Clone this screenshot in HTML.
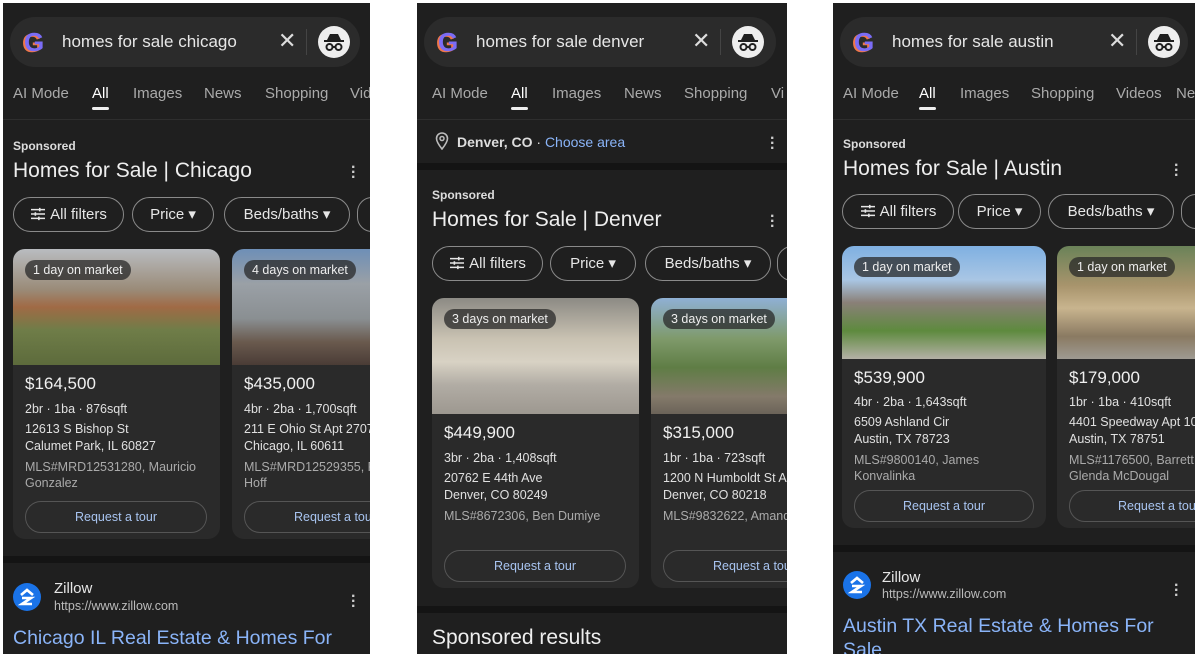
<!DOCTYPE html>
<html><head><meta charset="utf-8"><style>
*{margin:0;padding:0;box-sizing:border-box}
body{width:1200px;height:656px;background:#fff;position:relative;overflow:hidden;font-family:"Liberation Sans",Arial,sans-serif}
.p{position:absolute;top:3px;height:651px;background:#1f1f1f;overflow:hidden}
.a{position:absolute;white-space:nowrap}
.sb{position:absolute;left:7px;top:14px;width:350px;height:50px;border-radius:25px;background:#2b2b2b}
.g{position:absolute;left:14px;top:12px;width:26px;height:26px;font:bold 26px/26px "Liberation Sans";color:#7b6cf6;text-shadow:-2px 1px 0 #f0774a}
.q{position:absolute;left:52px;top:15px;font-size:17px;color:#e6e6e6;white-space:nowrap}
.x{position:absolute;left:268px;top:11px;font-size:22px;color:#ddd}
.vb{position:absolute;left:296px;top:12px;width:1px;height:26px;background:#444}
.inc{position:absolute;left:308px;top:9px;width:32px;height:32px;border-radius:50%;background:#eee}
.tab{position:absolute;top:82px;font-size:15px;color:#aaa;white-space:nowrap}
.tab.on{color:#fff}
.tab.on:after{content:"";position:absolute;left:0;right:0;bottom:-8px;height:3px;border-radius:2px;background:#eee}
.hr{position:absolute;left:0;right:0;height:1px;background:#2e2e2e}
.strip{position:absolute;left:0;right:0;height:7px;background:#141414}
.sp{font-size:12px;font-weight:bold;color:#ddd}
.tt{font-size:21px;color:#eee}
.dots{position:absolute;color:#ccc;font-size:16px;font-weight:bold;line-height:5px;width:4px}
.chip{position:absolute;height:35px;border:1px solid #8a8a8a;border-radius:18px;color:#e6e6e6;font-size:15px;line-height:33px;text-align:center;white-space:nowrap}
.chip svg{vertical-align:-2px;margin-right:4px}
.card{position:absolute;width:207px;background:#2a2a2a;border-radius:12px;overflow:hidden}
.img{position:absolute;left:0;top:0;right:0}
.badge{position:absolute;left:12px;top:11px;background:rgba(40,40,40,.75);color:#eee;font-size:12.5px;padding:3px 8px;border-radius:10px}
.pr{position:absolute;left:12px;font-size:17px;color:#f0f0f0}
.t1{position:absolute;left:12px;font-size:12.5px;color:#e0e0e0;line-height:17px;white-space:nowrap}
.t2{position:absolute;left:12px;font-size:12.5px;color:#aaa;line-height:16px;white-space:nowrap}
.btn{position:absolute;left:12px;width:182px;height:32px;border:1px solid #555;border-radius:16px;text-align:center;line-height:30px;color:#a8c4f0;font-size:12.5px;white-space:nowrap}
.zi{position:absolute;width:28px;height:28px;border-radius:50%;background:#1a73e8}
.link{font-size:19.5px;color:#8ab4f8}
</style></head><body>
<svg width="0" height="0" style="position:absolute">
 <defs>
  <symbol id="sl" viewBox="0 0 18 16"><g stroke="#e6e6e6" stroke-width="1.8" fill="none"><path d="M1 3h16M1 8h16M1 13h16"/><path d="M11 1v4M6 6v4M10 11v4"/></g></symbol>
  <symbol id="hat" viewBox="0 0 32 32"><path d="M9 14l3-6h8l3 6z" fill="#1f1f1f"/><rect x="6" y="14" width="20" height="2" fill="#1f1f1f"/><circle cx="11.5" cy="21" r="3" fill="none" stroke="#1f1f1f" stroke-width="2"/><circle cx="20.5" cy="21" r="3" fill="none" stroke="#1f1f1f" stroke-width="2"/><path d="M14.5 21h3" stroke="#1f1f1f" stroke-width="2"/></symbol>
  <symbol id="z" viewBox="0 0 28 28"><path d="M8 12l6-5 6 5" stroke="#fff" stroke-width="2.6" fill="none"/><path d="M9 15h9l-9 6h10" stroke="#fff" stroke-width="2.6" fill="none"/></symbol>
 </defs>
</svg>

<!-- PANEL 1 -->
<div class="p" style="left:3px;width:367px">
 <div class="sb"><div class="g">G</div><div class="q">homes for sale chicago</div><div class="x">✕</div><div class="vb"></div><div class="inc"><svg width="32" height="32"><use href="#hat"/></svg></div></div>
 <div class="tab" style="left:10px">AI Mode</div><div class="tab on" style="left:89px">All</div><div class="tab" style="left:130px">Images</div><div class="tab" style="left:201px">News</div><div class="tab" style="left:262px">Shopping</div><div class="tab" style="left:347px">Vid</div>
 <div class="hr" style="top:116px"></div>
 <div class="a sp" style="left:10px;top:136px">Sponsored</div>
 <div class="a tt" style="left:10px;top:156px">Homes for Sale | Chicago</div>
 <div class="dots" style="left:348px;top:162px">·<br>·<br>·</div>
 <div class="chip" style="left:10px;top:194px;width:111px"><svg width="16" height="14"><use href="#sl"/></svg>All filters</div>
 <div class="chip" style="left:129px;top:194px;width:82px">Price ▾</div>
 <div class="chip" style="left:221px;top:194px;width:126px">Beds/baths ▾</div>
 <div class="chip" style="left:354px;top:194px;width:30px"></div>
 <div class="card" style="left:10px;top:246px;height:290px">
  <div class="img" style="height:116px;background:linear-gradient(180deg,#b9bcc0 0%,#9a8b78 35%,#a06a45 50%,#6f7d48 70%,#5d6b3c 100%)"></div>
  <div class="badge">1 day on market</div>
  <div class="pr" style="top:125px">$164,500</div>
  <div class="t1" style="top:152px">2br · 1ba · 876sqft</div>
  <div class="t1" style="top:172px">12613 S Bishop St<br>Calumet Park, IL 60827</div>
  <div class="t2" style="top:210px">MLS#MRD12531280, Mauricio<br>Gonzalez</div>
  <div class="btn" style="top:252px">Request a tour</div>
 </div>
 <div class="card" style="left:229px;top:246px;height:290px">
  <div class="img" style="height:116px;background:linear-gradient(180deg,#6e8fb7 0%,#9aa0a6 30%,#8a8f92 60%,#6a5a4e 80%,#4a3c36 100%)"></div>
  <div class="badge">4 days on market</div>
  <div class="pr" style="top:125px">$435,000</div>
  <div class="t1" style="top:152px">4br · 2ba · 1,700sqft</div>
  <div class="t1" style="top:172px">211 E Ohio St Apt 2707<br>Chicago, IL 60611</div>
  <div class="t2" style="top:210px">MLS#MRD12529355, R<br>Hoff</div>
  <div class="btn" style="top:252px">Request a tour</div>
 </div>
 <div class="strip" style="top:553px"></div>
 <div class="zi" style="left:10px;top:580px"><svg width="28" height="28"><use href="#z"/></svg></div>
 <div class="a" style="left:51px;top:577px;font-size:15px;color:#e6e6e6">Zillow</div>
 <div class="a" style="left:51px;top:596px;font-size:12.5px;color:#bbb">https://www.zillow.com</div>
 <div class="dots" style="left:348px;top:591px">·<br>·<br>·</div>
 <div class="a link" style="left:10px;top:624px">Chicago IL Real Estate &amp; Homes For</div>
</div>

<!-- PANEL 2 -->
<div class="p" style="left:417px;width:370px">
 <div class="sb" style="width:352px"><div class="g">G</div><div class="q">homes for sale denver</div><div class="x">✕</div><div class="vb"></div><div class="inc"><svg width="32" height="32"><use href="#hat"/></svg></div></div>
 <div class="tab" style="left:15px">AI Mode</div><div class="tab on" style="left:94px">All</div><div class="tab" style="left:135px">Images</div><div class="tab" style="left:207px">News</div><div class="tab" style="left:267px">Shopping</div><div class="tab" style="left:354px">Vi</div>
 <div class="hr" style="top:116px"></div>
 <svg class="a" style="left:18px;top:129px" width="14" height="18" viewBox="0 0 14 18"><path d="M7 17C3 12 1.5 9 1.5 6.5a5.5 5.5 0 0 1 11 0C12.5 9 11 12 7 17z" fill="none" stroke="#bbb" stroke-width="1.6"/><circle cx="7" cy="6.5" r="2" fill="none" stroke="#bbb" stroke-width="1.5"/></svg>
 <div class="a" style="left:40px;top:131px;font-size:14px;color:#ddd"><b>Denver, CO</b> · <span style="color:#8ab4f8">Choose area</span></div>
 <div class="dots" style="left:353px;top:133px">·<br>·<br>·</div>
 <div class="strip" style="top:160px"></div>
 <div class="a sp" style="left:15px;top:185px">Sponsored</div>
 <div class="a tt" style="left:15px;top:205px">Homes for Sale | Denver</div>
 <div class="dots" style="left:353px;top:211px">·<br>·<br>·</div>
 <div class="chip" style="left:15px;top:243px;width:111px"><svg width="16" height="14"><use href="#sl"/></svg>All filters</div>
 <div class="chip" style="left:133px;top:243px;width:86px">Price ▾</div>
 <div class="chip" style="left:228px;top:243px;width:126px">Beds/baths ▾</div>
 <div class="chip" style="left:360px;top:243px;width:30px"></div>
 <div class="card" style="left:15px;top:295px;height:290px">
  <div class="img" style="height:116px;background:linear-gradient(180deg,#8c8a84 0%,#c9c2b2 35%,#d8d2c4 55%,#b1aca4 75%,#9d9890 100%)"></div>
  <div class="badge">3 days on market</div>
  <div class="pr" style="top:125px">$449,900</div>
  <div class="t1" style="top:152px">3br · 2ba · 1,408sqft</div>
  <div class="t1" style="top:172px">20762 E 44th Ave<br>Denver, CO 80249</div>
  <div class="t2" style="top:210px">MLS#8672306, Ben Dumiye</div>
  <div class="btn" style="top:252px">Request a tour</div>
 </div>
 <div class="card" style="left:234px;top:295px;height:290px">
  <div class="img" style="height:116px;background:linear-gradient(180deg,#8fb0d4 0%,#7f9a6b 35%,#5f7d45 60%,#847a6a 85%,#6b6359 100%)"></div>
  <div class="badge">3 days on market</div>
  <div class="pr" style="top:125px">$315,000</div>
  <div class="t1" style="top:152px">1br · 1ba · 723sqft</div>
  <div class="t1" style="top:172px">1200 N Humboldt St Ap<br>Denver, CO 80218</div>
  <div class="t2" style="top:210px">MLS#9832622, Amanda</div>
  <div class="btn" style="top:252px">Request a tour</div>
 </div>
 <div class="strip" style="top:603px"></div>
 <div class="a tt" style="left:15px;top:623px">Sponsored results</div>
</div>

<!-- PANEL 3 -->
<div class="p" style="left:833px;width:362px">
 <div class="sb" style="width:348px"><div class="g">G</div><div class="q">homes for sale austin</div><div class="x">✕</div><div class="vb"></div><div class="inc"><svg width="32" height="32"><use href="#hat"/></svg></div></div>
 <div class="tab" style="left:10px">AI Mode</div><div class="tab on" style="left:86px">All</div><div class="tab" style="left:127px">Images</div><div class="tab" style="left:198px">Shopping</div><div class="tab" style="left:283px">Videos</div><div class="tab" style="left:343px">Ne</div>
 <div class="hr" style="top:116px"></div>
 <div class="a sp" style="left:10px;top:134px">Sponsored</div>
 <div class="a tt" style="left:10px;top:154px">Homes for Sale | Austin</div>
 <div class="dots" style="left:341px;top:160px">·<br>·<br>·</div>
 <div class="chip" style="left:9px;top:191px;width:112px"><svg width="16" height="14"><use href="#sl"/></svg>All filters</div>
 <div class="chip" style="left:125px;top:191px;width:83px">Price ▾</div>
 <div class="chip" style="left:215px;top:191px;width:126px">Beds/baths ▾</div>
 <div class="chip" style="left:348px;top:191px;width:30px"></div>
 <div class="card" style="left:9px;top:243px;height:282px;width:204px">
  <div class="img" style="height:113px;background:linear-gradient(180deg,#7fb0e2 0%,#a9c6e4 30%,#8a8078 50%,#5e8a3e 75%,#b4b0a6 100%)"></div>
  <div class="badge">1 day on market</div>
  <div class="pr" style="top:122px">$539,900</div>
  <div class="t1" style="top:148px">4br · 2ba · 1,643sqft</div>
  <div class="t1" style="top:168px">6509 Ashland Cir<br>Austin, TX 78723</div>
  <div class="t2" style="top:206px">MLS#9800140, James<br>Konvalinka</div>
  <div class="btn" style="top:244px;width:180px">Request a tour</div>
 </div>
 <div class="card" style="left:224px;top:243px;height:282px;width:204px">
  <div class="img" style="height:113px;background:linear-gradient(180deg,#6a8258 0%,#a8946c 35%,#c8b48e 55%,#8a7a62 80%,#9e9a92 100%)"></div>
  <div class="badge">1 day on market</div>
  <div class="pr" style="top:122px">$179,000</div>
  <div class="t1" style="top:148px">1br · 1ba · 410sqft</div>
  <div class="t1" style="top:168px">4401 Speedway Apt 105<br>Austin, TX 78751</div>
  <div class="t2" style="top:206px">MLS#1176500, Barrett R<br>Glenda McDougal</div>
  <div class="btn" style="top:244px;width:180px">Request a tour</div>
 </div>
 <div class="strip" style="top:542px"></div>
 <div class="zi" style="left:10px;top:568px"><svg width="28" height="28"><use href="#z"/></svg></div>
 <div class="a" style="left:49px;top:566px;font-size:15px;color:#e6e6e6">Zillow</div>
 <div class="a" style="left:49px;top:584px;font-size:12.5px;color:#bbb">https://www.zillow.com</div>
 <div class="dots" style="left:341px;top:580px">·<br>·<br>·</div>
 <div class="a link" style="left:10px;top:612px">Austin TX Real Estate &amp; Homes For</div>
 <div class="a link" style="left:10px;top:636px">Sale</div>
</div>
</body></html>
